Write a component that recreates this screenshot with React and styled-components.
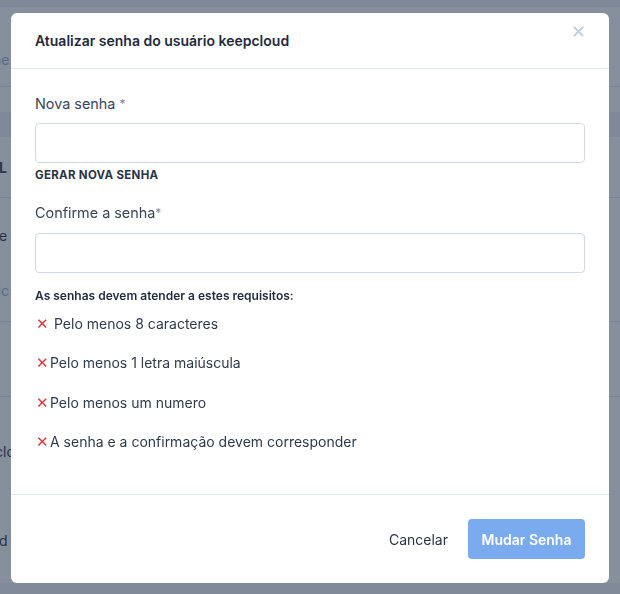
import React from "react";
import styled, { createGlobalStyle } from "styled-components";

const Global = createGlobalStyle`
  * { box-sizing: border-box; }
  html, body { margin: 0; padding: 0; }
  body {
    width: 620px;
    height: 594px;
    overflow: hidden;
    background: #868f9c;
    font-family: Inter, "Open Sans", sans-serif;
  }
`;

const Page = styled.div`
  width: 620px;
  height: 594px;
  display: flex;
  flex-direction: column;
  background: #868f9c;
  overflow: hidden;
`;

const TopBand = styled.div`
  height: 7px;
  flex: none;
  background: #7f8896;
`;

const BgRow = styled.div`
  height: ${(p) => p.$h}px;
  flex: none;
  display: flex;
  flex-direction: column;
  align-items: flex-start;
  background: ${(p) => (p.$dark ? "#808998" : "transparent")};
  border-bottom: ${(p) => (p.$line ? "1px solid #7a8391" : "none")};
  overflow: hidden;
`;

const BgText = styled.span`
  display: block;
  margin-left: ${(p) => p.$ml}px;
  margin-top: ${(p) => p.$mt || 0}px;
  font-size: 14px;
  line-height: 20px;
  font-weight: ${(p) => (p.$bold ? 700 : 400)};
  color: ${(p) => p.$c || "#2b3547"};
  white-space: nowrap;
`;

const BottomBand = styled.div`
  flex: 1;
  background: #818a98;
`;

const Overlay = styled.div`
  position: fixed;
  inset: 0;
  display: flex;
  justify-content: center;
  align-items: flex-start;
  padding-top: 13px;
`;

const Modal = styled.div`
  width: 598px;
  height: 570px;
  background: #ffffff;
  border-radius: 6px;
  display: flex;
  flex-direction: column;
`;

const Header = styled.div`
  height: 56px;
  border-bottom: 1px solid #e1e8f3;
  display: flex;
  align-items: flex-start;
  justify-content: space-between;
  padding: 18px 24px 0 24px;
`;

const Title = styled.h2`
  margin: 0;
  font-size: 14px;
  line-height: 20px;
  font-weight: 600;
  color: #1f2a3d;
`;

const Close = styled.button`
  border: none;
  background: none;
  padding: 0;
  margin-top: -8px;
  margin-right: -1px;
  width: 16px;
  height: 16px;
  display: flex;
  align-items: center;
  justify-content: center;
  cursor: pointer;
`;

const Body = styled.div`
  flex: 1;
  padding: 25px 24px 0 24px;
  border-bottom: 1px solid #e1e8f3;
  display: flex;
  flex-direction: column;
`;

const Label = styled.label`
  font-size: 14.4px;
  color: #3a4558;
  line-height: 20px;
  display: block;
`;

const Star = styled.span`
  color: #7a8496;
  font-size: 12px;
  vertical-align: top;
`;

const Input = styled.input`
  display: block;
  width: 100%;
  height: 40px;
  margin-top: ${(p) => p.$mt}px;
  border: 1px solid #d0d9e5;
  border-radius: 4px;
  outline: none;
  font-size: 14px;
  padding: 0 12px;
`;

const Generate = styled.button`
  border: none;
  background: none;
  padding: 0;
  margin-top: 5px;
  align-self: flex-start;
  font-family: inherit;
  font-size: 11.5px;
  font-weight: 700;
  letter-spacing: 0.3px;
  color: #2a3446;
  line-height: 14px;
`;

const Field = styled.div`
  margin-top: ${(p) => p.$mt}px;
`;

const ReqTitle = styled.div`
  margin-top: 15px;
  font-size: 12px;
  font-weight: 600;
  color: #1f2a3d;
  line-height: 16px;
`;

const ReqList = styled.ul`
  list-style: none;
  margin: 10px 0 0 0;
  padding: 0;
  display: flex;
  flex-direction: column;
  gap: 19.3px;
`;

const ReqItem = styled.li`
  display: flex;
  align-items: center;
  font-size: 14px;
  color: #2f3a4d;
  line-height: 20px;
`;

const Cross = styled.span`
  color: #e3343d;
  font-size: 15px;
  margin-left: 1px;
  margin-right: ${(p) => p.$mr}px;
  line-height: 20px;
`;

const Footer = styled.div`
  height: 88px;
  display: flex;
  align-items: center;
  justify-content: flex-end;
  gap: 20px;
  padding: 0 24px 0 24px;
`;

const CancelBtn = styled.button`
  border: none;
  background: none;
  padding: 0;
  font-family: inherit;
  font-size: 14px;
  color: #2a3446;
`;

const PrimaryBtn = styled.button`
  border: none;
  background: #7aabee;
  color: #ffffff;
  border-radius: 4px;
  height: 40px;
  width: 117px;
  font-family: inherit;
  font-size: 14px;
  font-weight: 600;
`;

const reqs = [
  { t: "Pelo menos 8 caracteres", mr: 5 },
  { t: "Pelo menos 1 letra maiúscula", mr: 1 },
  { t: "Pelo menos um numero", mr: 1 },
  { t: "A senha e a confirmação devem corresponder", mr: 1 },
];

export default function App() {
  return (
    <>
      <Global />
      <Page>
        <TopBand />
        <BgRow $h={80} $line>
          <BgText $ml={-7} $mt={43} $c="#5a6a86">ne</BgText>
        </BgRow>
        <BgRow $h={25} />
        <BgRow $h={25} $dark />
        <BgRow $h={61} $line>
          <BgText $ml={-1} $mt={21} $bold>L</BgText>
        </BgRow>
        <BgRow $h={124} $line>
          <BgText $ml={-6} $mt={28}>re</BgText>
          <BgText $ml={-8} $mt={35} $c="#5a6a86">ric</BgText>
        </BgRow>
        <BgRow $h={75} $line />
        <BgRow $h={186}>
          <BgText $ml={-5} $mt={45} $c="#23344f">clo</BgText>
          <BgText $ml={-1} $mt={69} $c="#23344f">d</BgText>
        </BgRow>
        <BottomBand />
      </Page>
      <Overlay>
        <Modal>
          <Header>
            <Title>Atualizar senha do usuário keepcloud</Title>
            <Close aria-label="Fechar">
              <svg width="11" height="11" viewBox="0 0 11 11">
                <path d="M1.5 1.5 L9.5 9.5 M9.5 1.5 L1.5 9.5" stroke="#c5d0e0" strokeWidth="2.2" strokeLinecap="round" />
              </svg>
            </Close>
          </Header>
          <Body>
            <Field $mt={0}>
              <Label>
                Nova senha <Star>*</Star>
              </Label>
              <Input type="password" $mt={9} />
            </Field>
            <Generate>GERAR NOVA SENHA</Generate>
            <Field $mt={21}>
              <Label>
                Confirme a senha<Star>*</Star>
              </Label>
              <Input type="password" $mt={10} />
            </Field>
            <ReqTitle>As senhas devem atender a estes requisitos:</ReqTitle>
            <ReqList>
              {reqs.map((r) => (
                <ReqItem key={r.t}>
                  <Cross $mr={r.mr}>✕</Cross>
                  {r.t}
                </ReqItem>
              ))}
            </ReqList>
          </Body>
          <Footer>
            <CancelBtn>Cancelar</CancelBtn>
            <PrimaryBtn>Mudar Senha</PrimaryBtn>
          </Footer>
        </Modal>
      </Overlay>
    </>
  );
}
